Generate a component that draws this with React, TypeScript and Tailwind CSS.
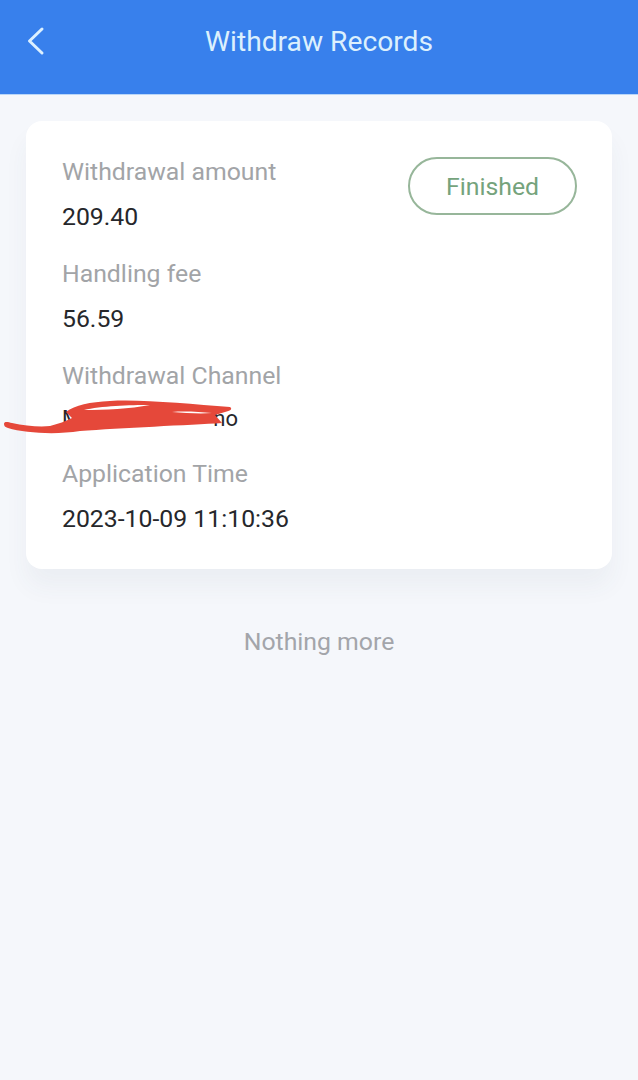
const rows = [
  { label: "Withdrawal amount", value: "209.40", labelMargin: "mb-[15px]", rowMargin: "mb-[27px]" },
  { label: "Handling fee", value: "56.59", labelMargin: "mb-[15px]", rowMargin: "mb-[27px]" },
  { label: "Application Time", value: "2023-10-09 11:10:36", labelMargin: "mb-[15px]", rowMargin: "" },
];

export default function App() {
  return (
    <div className="relative min-h-[1080px] w-[638px] overflow-hidden bg-[#f5f7fb] font-['Roboto',sans-serif]">
      {/* Header */}
      <header className="relative flex h-[94px] items-center justify-center bg-[#3880ec] pb-[11px] shadow-[0_1px_0_#b9d6f8]">
        <svg className="absolute left-[24px] top-[26px]" width="22" height="30" viewBox="0 0 22 30" fill="none">
          <path d="M18 3 L5.5 15 L18 27" stroke="#dcf0ff" strokeWidth="3" strokeLinecap="round" strokeLinejoin="round" />
        </svg>
        <h1 className="text-[28.2px] leading-[30px] font-normal text-[#dcf0fd]">Withdraw Records</h1>
      </header>

      {/* Record card */}
      <main className="px-[26px] pt-[27px]">
        <section className="relative h-[448px] rounded-[16px] bg-white pl-[36px] pt-[36px] shadow-[0_18px_24px_rgba(60,70,100,0.05)]">
          {rows.slice(0, 2).map((row) => (
            <div key={row.label} className={row.rowMargin}>
              <div className={`text-[24.8px] leading-[30px] text-[#a2a4a7] ${row.labelMargin}`}>{row.label}</div>
              <div className="text-[24.8px] leading-[30px] text-[#26272b]">{row.value}</div>
            </div>
          ))}

          {/* Channel name is scribbled out, only the ends can be read */}
          <div className="mb-[25px]">
            <div className="mb-[13px] text-[24.8px] leading-[30px] text-[#a2a4a7]">Withdrawal Channel</div>
            <div className="flex w-[176px] justify-between text-[22px] leading-[30px] text-[#26272b]">
              <span>M</span>
              <span>no</span>
            </div>
          </div>

          {rows.slice(2).map((row) => (
            <div key={row.label}>
              <div className={`text-[24.8px] leading-[30px] text-[#a2a4a7] ${row.labelMargin}`}>{row.label}</div>
              <div className="text-[24.8px] leading-[30px] text-[#26272b]">{row.value}</div>
            </div>
          ))}

          <div className="absolute left-[382px] top-[36px] flex h-[58px] w-[169px] items-center justify-center rounded-full border-2 border-[#97b69a] pt-[2px] text-[24.8px] text-[#75a37c]">
            Finished
          </div>
        </section>
        <p className="mt-[58px] text-center text-[24.8px] leading-[30px] text-[#a3a5aa]">Nothing more</p>
      </main>

      {/* Red scribble */}
      <svg className="absolute left-0 top-[390px]" width="240" height="50" viewBox="0 0 240 50">
        <path
          fillRule="evenodd"
          fill="#e5483a"
          d="M4 34 C4 31 8 32 12 33 C25 36 40 37 50 36 C58 34 66 31 72 28 L66 22 C75 15 90 12 110 11 C140 9 190 14 230 17 C233 19 230 21 225 22 L215 25 L222 33 C190 35 120 38 80 41 C55 45 25 43 8 38 C5 37 4 36 4 34 Z M84 20 C100 16 130 15 150 15 C130 19 105 20 84 20 Z M172 22 C185 21 200 22 212 23 C200 24 185 23 172 22 Z"
        />
      </svg>
    </div>
  );
}
